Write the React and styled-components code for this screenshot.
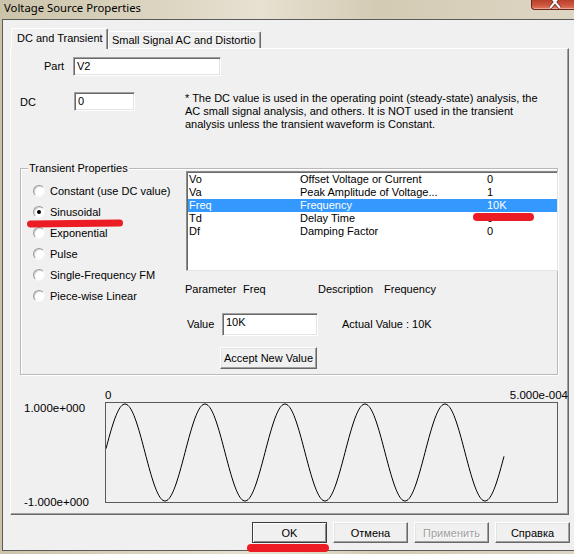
import React from 'react';
import styled, { createGlobalStyle } from 'styled-components';

const GlobalStyle = createGlobalStyle`
  html, body {
    margin: 0;
    padding: 0;
  }
  body {
    background: #d8d0b9;
    font-family: "Liberation Sans", Arial, sans-serif;
    font-size: 11px;
    color: #000;
  }
`;

const Window = styled.div`
  position: relative;
  width: 574px;
  height: 554px;
  display: flex;
  flex-direction: column;
  background: linear-gradient(90deg, #cbc3a9 0%, #dcd5c1 28%, #e7e1d2 45%, #d3cbb3 66%, #ddd6c3 100%);
  overflow: hidden;
`;

const TitleBar = styled.div`
  height: 19px;
  flex: none;
  display: flex;
  align-items: flex-start;
  padding-left: 4px;
`;

const Title = styled.span`
  font-family: "Noto Sans", "Open Sans", sans-serif;
  font-size: 11.3px;
  line-height: 15px;
  color: #000;
`;

const CloseButton = styled.div`
  margin-left: auto;
  margin-right: -4px;
  width: 47px;
  height: 10px;
  box-sizing: border-box;
  border: 1px solid #6d2519;
  border-top: none;
  border-radius: 0 0 4px 4px;
  background: linear-gradient(180deg, #b8402b 0%, #d0573f 60%, #e07a5f 100%);
  box-shadow: inset 0 -1px 0 rgba(255, 255, 255, 0.35);
  display: flex;
  justify-content: center;
  overflow: hidden;
`;

const Body = styled.div`
  margin-left: 2px;
  height: 532px;
  flex: none;
  box-sizing: border-box;
  border: 1px solid #5b5b5b;
  border-right: none;
  background: #f0f0f0;
  padding: 8px 0 0 7px;
  display: flex;
  flex-direction: column;
`;

const TabStrip = styled.div`
  display: flex;
  align-items: flex-end;
  height: 20px;
`;

const Tab = styled.div`
  position: relative;
  z-index: ${p => (p.active ? 2 : 1)};
  box-sizing: border-box;
  height: ${p => (p.active ? '21px' : '17px')};
  margin-bottom: ${p => (p.active ? '-1px' : '0')};
  margin-left: ${p => (p.active ? '1px' : '0')};
  width: ${p => p.w}px;
  padding: ${p => (p.active ? '3px 0 0 5px' : '2px 0 0 3px')};
  background: #f0f0f0;
  border-top: 1px solid #fff;
  border-left: 1px solid #fff;
  border-right: 1px solid #696969;
  border-radius: 2px 2px 0 0;
  box-shadow: inset -1px 0 0 #a0a0a0;
  white-space: nowrap;
  overflow: hidden;
  line-height: 13px;
`;

const TabPanel = styled.div`
  width: 559px;
  height: 467px;
  box-sizing: border-box;
  border-top: 1px solid #fff;
  border-left: 1px solid #fff;
  border-right: 1px solid #696969;
  border-bottom: 1px solid #696969;
  box-shadow: inset -1px -1px 0 #a0a0a0;
  display: flex;
  flex-direction: column;
`;

const FieldRow = styled.div`
  display: flex;
  align-items: ${p => (p.top ? 'flex-start' : 'center')};
  margin-top: ${p => p.mt}px;
  padding-left: ${p => p.pl}px;
`;

const Label = styled.span`
  width: ${p => p.w}px;
  flex: none;
  line-height: 13px;
  margin-top: ${p => p.mt || 0}px;
  white-space: nowrap;
`;

const TextBox = styled.div`
  width: ${p => p.w}px;
  height: ${p => p.h || 19}px;
  flex: none;
  box-sizing: border-box;
  background: #fff;
  border: 1px solid;
  border-color: #a0a0a0 #fff #fff #a0a0a0;
  box-shadow: inset 1px 1px 0 #696969, inset -1px -1px 0 #e3e3e3;
  padding: 2px 0 0 3px;
  line-height: 13px;
`;

const Note = styled.div`
  margin-left: 50px;
  line-height: 13px;
  white-space: nowrap;
`;

const GroupBox = styled.div`
  position: relative;
  margin: 37px 0 0 9px;
  width: 538px;
  height: 207px;
  box-sizing: border-box;
  border: 1px solid #b9b9b9;
  box-shadow: inset 1px 1px 0 #fff, 1px 1px 0 #fff;
  display: grid;
  grid-template-columns: 164px 1fr;
  align-items: start;
`;

const Legend = styled.span`
  position: absolute;
  top: -7px;
  left: 7px;
  padding: 0 1px;
  background: #f0f0f0;
  line-height: 13px;
`;

const RadioList = styled.div`
  display: flex;
  flex-direction: column;
  padding: 11px 0 0 12px;
`;

const RadioRow = styled.div`
  display: flex;
  align-items: center;
  height: 21px;
  gap: 5px;
  white-space: nowrap;
`;

const RadioDot = styled.span`
  width: 12px;
  height: 12px;
  flex: none;
  box-sizing: border-box;
  border-radius: 50%;
  background: #fff;
  border: 1px solid;
  border-color: #9a9a9a #f6f6f6 #f6f6f6 #9a9a9a;
  box-shadow: inset 1px 1px 0 #d4d4d4;
  display: flex;
  align-items: center;
  justify-content: center;

  &::after {
    content: '';
    width: 4px;
    height: 4px;
    border-radius: 50%;
    background: ${p => (p.checked ? '#000' : 'transparent')};
  }
`;

const RightColumn = styled.div`
  display: flex;
  flex-direction: column;
`;

const ParamList = styled.div`
  margin: 2px 0 0 1px;
  width: 372px;
  height: 100px;
  box-sizing: border-box;
  background: #fff;
  border: 1px solid;
  border-color: #8c8c8c #e3e3e3 #e3e3e3 #8c8c8c;
  box-shadow: inset 1px 1px 0 #6a6a6a;
  padding: 1px 0 0 1px;
`;

const ParamRow = styled.div`
  display: grid;
  grid-template-columns: 111px 187px 1fr;
  height: 13px;
  line-height: 13px;
  padding-left: 1px;
  white-space: nowrap;
  background: ${p => (p.selected ? '#3399ff' : 'transparent')};
  color: ${p => (p.selected ? '#fff' : '#000')};
`;

const InfoLine = styled.div`
  display: flex;
  margin-top: ${p => p.mt}px;
  align-items: center;
  line-height: 13px;
  white-space: nowrap;
`;

const ClassicButton = styled.button`
  width: ${p => p.w || 75}px;
  height: ${p => p.h || 21}px;
  margin-left: ${p => p.ml || 0}px;
  margin-top: ${p => p.mt || 0}px;
  flex: none;
  box-sizing: border-box;
  padding: 0;
  font-family: "Liberation Sans", Arial, sans-serif;
  font-size: 11px;
  color: ${p => (p.disabled ? '#a0a0a0' : '#000')};
  text-shadow: ${p => (p.disabled ? '1px 1px 0 #fff' : 'none')};
  background: #f0f0f0;
  border: 1px solid;
  border-color: ${p => (p.primary ? '#3c3c3c' : '#fff #696969 #696969 #fff')};
  box-shadow: ${p =>
    p.primary
      ? 'inset 1px 1px 0 #fff, inset -1px -1px 0 #8a8a8a'
      : 'inset -1px -1px 0 #a0a0a0, inset 1px 1px 0 #e3e3e3'};
`;

const Chart = styled.div`
  display: grid;
  grid-template-columns: 81px 453px;
  grid-template-rows: 14px 101px;
  margin: 13px 0 0 13px;
  font-size: 11.5px;
`;

const XLabels = styled.div`
  grid-column: 2;
  grid-row: 1;
  display: flex;
  justify-content: space-between;
  margin-right: -10px;
  line-height: 14px;
`;

const YLabels = styled.div`
  grid-column: 1;
  grid-row: 2;
  display: flex;
  flex-direction: column;
  justify-content: space-between;
  margin-bottom: -6px;
  line-height: 13px;
`;

const Plot = styled.div`
  grid-column: 2;
  grid-row: 2;
  box-sizing: border-box;
  border: 1px solid #5a5a5a;
  display: flex;
`;

const ButtonRow = styled.div`
  width: 560px;
  margin-top: 7px;
  display: flex;
  justify-content: flex-end;
  gap: 6px;
`;

const Marker = styled.div`
  position: absolute;
  left: ${p => p.x}px;
  top: ${p => p.y}px;
  width: ${p => p.w}px;
  height: ${p => p.h}px;
  background: #ec1c24;
  border-radius: 4px;
  transform: rotate(${p => p.r || 0}deg);
`;

const params = [
  ['Vo', 'Offset Voltage or Current', '0'],
  ['Va', 'Peak Amplitude of Voltage...', '1'],
  ['Freq', 'Frequency', '10K'],
  ['Td', 'Delay Time', '0'],
  ['Df', 'Damping Factor', '0'],
];

const waveforms = [
  'Constant (use DC value)',
  'Sinusoidal',
  'Exponential',
  'Pulse',
  'Single-Frequency FM',
  'Piece-wise Linear',
];

// 5 periods of the sine preview, 80px per period
const wavePath = () => {
  let d = '';
  for (let x = 0; x <= 398; x += 1) {
    const y = 49.5 - 48.5 * Math.sin((2 * Math.PI * (x + 1)) / 80);
    d += (x === 0 ? 'M' : 'L') + x + ' ' + y.toFixed(2) + ' ';
  }
  return d;
};

const App = () => {
  return (
    <Window>
      <GlobalStyle />
      <TitleBar>
        <Title>Voltage Source Properties</Title>
        <CloseButton>
          <svg width="12" height="9" viewBox="0 0 12 9">
            <path d="M1 -4 L11 8 M11 -4 L1 8" stroke="#5a2a20" strokeWidth="3.4" />
            <path d="M1 -4 L11 8 M11 -4 L1 8" stroke="#fff" strokeWidth="2" />
          </svg>
        </CloseButton>
      </TitleBar>

      <Body>
        <TabStrip>
          <Tab active w={97}>DC and Transient</Tab>
          <Tab w={153}>Small Signal AC and Distortio</Tab>
        </TabStrip>

        <TabPanel>
          <FieldRow mt={8} pl={33}>
            <Label w={29}>Part</Label>
            <TextBox w={148}>V2</TextBox>
          </FieldRow>

          <FieldRow top mt={16} pl={9}>
            <Label w={54} mt={4}>DC</Label>
            <TextBox w={61}>0</TextBox>
            <Note>
              * The DC value is used in the operating point (steady-state) analysis, the
              <br />
              AC small signal analysis, and others. It is NOT used in the transient
              <br />
              analysis unless the transient waveform is Constant.
            </Note>
          </FieldRow>

          <GroupBox>
            <Legend>Transient Properties</Legend>
            <RadioList>
              {waveforms.map(w => (
                <RadioRow key={w}>
                  <RadioDot checked={w === 'Sinusoidal'} />
                  {w}
                </RadioRow>
              ))}
            </RadioList>

            <RightColumn>
              <ParamList>
                {params.map(([name, desc, value]) => (
                  <ParamRow key={name} selected={name === 'Freq'}>
                    <span>{name}</span>
                    <span>{desc}</span>
                    <span>{value}</span>
                  </ParamRow>
                ))}
              </ParamList>

              <InfoLine mt={12}>
                <Label w={58}>Parameter</Label>
                <Label w={75}>Freq</Label>
                <Label w={66}>Description</Label>
                <Label w={80}>Frequency</Label>
              </InfoLine>

              <InfoLine mt={17}>
                <Label w={35} style={{ paddingLeft: 2 }}>Value</Label>
                <TextBox w={96} h={23}>10K</TextBox>
                <Label w={120} style={{ marginLeft: 24 }}>Actual Value :  10K</Label>
              </InfoLine>

              <ClassicButton w={97} h={22} ml={35} mt={11}>Accept New Value</ClassicButton>
            </RightColumn>
          </GroupBox>

          <Chart>
            <XLabels>
              <span>0</span>
              <span>5.000e-004</span>
            </XLabels>
            <YLabels>
              <span>1.000e+000</span>
              <span>-1.000e+000</span>
            </YLabels>
            <Plot>
              <svg width="451" height="99" viewBox="0 0 451 99">
                <path d={wavePath()} fill="none" stroke="#000" strokeWidth="1" />
              </svg>
            </Plot>
          </Chart>
        </TabPanel>

        <ButtonRow>
          <ClassicButton primary>OK</ClassicButton>
          <ClassicButton>Отмена</ClassicButton>
          <ClassicButton disabled>Применить</ClassicButton>
          <ClassicButton>Справка</ClassicButton>
        </ButtonRow>
      </Body>

      <Marker x={27} y={220} w={96} h={7} r={-0.5} />
      <Marker x={473} y={213} w={61} h={8} />
      <Marker x={247} y={544} w={82} h={8} />
    </Window>
  );
};

export default App;
